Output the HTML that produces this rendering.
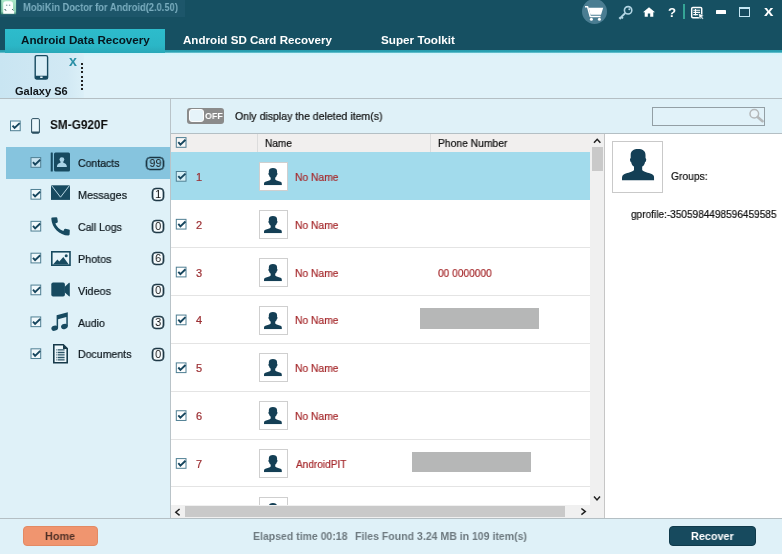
<!DOCTYPE html>
<html>
<head>
<meta charset="utf-8">
<title>MobiKin Doctor for Android</title>
<style>
*{box-sizing:border-box;margin:0;padding:0}
html,body{width:782px;height:554px;overflow:hidden;background:#dff1f8}
body{font-family:"Liberation Sans",sans-serif;font-size:11px;color:#111;position:relative}
.abs{position:absolute}
.t{position:absolute;white-space:nowrap;transform-origin:0 0;will-change:transform}
svg{display:block;overflow:visible}
#hdr{left:0;top:0;width:782px;height:50px;background:#165062}
#ttl{left:0;top:0;width:185px;height:16.5px;background:#1d566a}
#line{left:0;top:50px;width:782px;height:3px;background:linear-gradient(#279cad,#2ba3b4 72%,#a5dfe8)}
#tab1{left:5px;top:29px;width:160px;height:23.5px;background:linear-gradient(#2dbccc,#2bb6c6 70%,#29a8b8)}
#devbar{left:0;top:53px;width:782px;height:45px;background:linear-gradient(#d3f4fb,#e0f2f9 4px)}
#devtab{left:0;top:53px;width:84px;height:45px;background:linear-gradient(90deg,#c9e5f2,#d2e9f4 80%,#dcf0f8)}
.hl{background:#b4bfc4;height:1px}
.vl{background:#b9c3c8;width:1px}
.cb{width:11px;height:11px;border:1px solid #4d7f93;background:#f2fafd}
.cb svg{position:absolute;left:-1px;top:-1px}
.badge{height:13px;border:1px solid #1b3644;box-shadow:0 0 0 .35px #1b3644,inset 0 0 0 .35px #1b3644;border-radius:4px;font-size:11.5px;line-height:11px;text-align:center;color:#111;background:#f6fbfd}
.badge span{display:inline-block;transform:scaleX(.92);will-change:transform}
#main{left:171px;top:134px;width:419px;height:371px;background:#fff}
#thead{left:171px;top:134px;width:419px;height:18px;background:#f1efee}
.row{left:171px;width:419px;height:48px;border-bottom:1px solid #e4e4e4;background:#fff}
.row.sel{background:#a2dbec;border-bottom-color:#a2dbec}
.av{left:259px;width:29px;height:29px;border:1px solid #cfcfcf;background:#fff}
#detail{left:605px;top:134px;width:177px;height:384px;background:#fff}
#foot{left:0;top:519px;width:782px;height:35px;background:#dff1f8}
.gray{background:#b6b7b7}
</style>
</head>
<body>
<svg width="0" height="0" style="position:absolute">
<defs>
<g id="cbx"><rect x=".5" y=".5" width="9.700" height="9.700" fill="#fff" fill-opacity=".55" stroke="#4f7f93" stroke-width="1"/><path d="M2.500 5.100 L4.600 7.500 L9.700 2.600" fill="none" stroke="#17465e" stroke-width="1.900"/></g>
<symbol id="person" viewBox="0 0 252 247" preserveAspectRatio="none"><path d="M126 0C160 0 184 14 184 48L184 72C190 72 191 80 188 92C186 100 183 103 180 103C177 120 169 130 158 138L158 165C170 180 205 186 232 196C246 202 252 212 252 228L252 247L0 247L0 228C0 212 6 202 20 196C47 186 82 180 94 165L94 138C83 130 75 120 72 103C69 103 66 100 64 92C61 80 62 72 68 72L68 48C68 14 92 0 126 0Z" fill="#143f55"/></symbol>
</defs>
</svg>

<div id="hdr" class="abs"></div>
<div id="ttl" class="abs"></div>
<div id="line" class="abs"></div>
<div id="tab1" class="abs"></div>
<!--HDRICONS_BEGIN-->
<!-- app logo -->
<svg class="abs" style="left:0;top:0" width="17" height="15" viewBox="0 0 17 15"><defs><linearGradient id="lg" x1="0" y1="0" x2="0" y2="1"><stop offset="0" stop-color="#a9e6c6"/><stop offset=".8" stop-color="#8fd2b3"/><stop offset="1" stop-color="#3f8a78"/></linearGradient></defs><rect x=".3" y="0" width="1" height="14.300" fill="#1f6b52"/><rect x="1.200" y="0" width="14.900" height="14.300" fill="url(#lg)"/><path d="M3.200 13.700V4c0-1.600 1-2.700 2.600-2.700h4.600c1.600 0 2.600 1.100 2.600 2.700v5.200l1.200 2v2.500z" fill="#fbfefd"/><circle cx="6.700" cy="5.300" r=".8" fill="#8aa3a8"/><circle cx="9.600" cy="5.300" r=".8" fill="#8aa3a8"/><path d="M4.700 9 L6 10.700 M12.200 9.200 L13.300 10.400" stroke="#1d4a50" stroke-width="1"/></svg>
<!-- cart -->
<div class="abs" style="left:581.500px;top:-1.500px;width:25px;height:25px;border-radius:50%;background:#4a7d92"></div>
<svg class="abs" style="left:584px;top:5px" width="21" height="17" viewBox="0 0 21 17"><path d="M1 1.800 H3.600 L6.200 11.400 H16.600" fill="none" stroke="#fff" stroke-width="1.500" stroke-linejoin="round"/><path d="M4.600 2.800 H19.200 L17 9.800 H6.500z" fill="#fff"/><circle cx="7.400" cy="14.300" r="1.500" fill="#fff"/><circle cx="15.400" cy="14.300" r="1.500" fill="#fff"/></svg>
<!-- key -->
<svg class="abs" style="left:618px;top:5px" width="15" height="15" viewBox="0 0 15 15"><circle cx="10.100" cy="5.300" r="3.700" fill="none" stroke="#b3d6e4" stroke-width="1.600"/><circle cx="11.300" cy="4.200" r="1" fill="#b3d6e4"/><path d="M7.300 8 L1.600 13.600 M3.400 11.800 L5 13.400 M1.200 12.400 L2.900 14" fill="none" stroke="#b3d6e4" stroke-width="1.900"/></svg>
<!-- home -->
<svg class="abs" style="left:643px;top:7px" width="12" height="10" viewBox="0 0 12 10"><path d="M6 .2 L12 5.300 H10.300 V9.800 H7.200 V6.600 H4.800 V9.800 H1.700 V5.300 H0z" fill="#fff"/></svg>
<!-- sep -->
<div class="abs" style="left:683.300px;top:4px;width:1.600px;height:15px;background:#35a596"></div>
<!-- feedback -->
<svg class="abs" style="left:690px;top:6px" width="15" height="13" viewBox="0 0 15 13"><rect x="1.700" y="1.400" width="10" height="10.400" rx="1.200" fill="none" stroke="#fff" stroke-width="1.500"/><path d="M3.300 4.200h6.800M3.300 6.400h6.800M3.300 8.600h4.600M5.500 3v6.600" stroke="#fff" stroke-width="1.100"/><path d="M8.400 7.200 L14 9.700 L11.900 10.500 L13.500 12.400 L12.300 13.200 L10.900 11.200 L9.400 12.700z" fill="#fff" stroke="#165062" stroke-width=".5"/></svg>
<!-- min -->
<div class="abs" style="left:716px;top:10.400px;width:10px;height:3.600px;background:#fff;border-radius:.6px"></div>
<!-- max -->
<div class="abs" style="left:738.600px;top:6.800px;width:11.600px;height:10px;border:1.200px solid #c4e6f3;border-top-width:2.400px;background:#154a5e"></div>
<!--HDRICONS_END-->

<div id="devbar" class="abs"></div>
<div id="devtab" class="abs"></div>
<div class="t" style="left:69.3px;top:54px;font-weight:bold;font-size:14px;line-height:14px;color:#2a90a6;transform:scaleX(1.02)">x</div>
<div class="abs" style="left:81px;top:63px;width:2px;height:28px;background:repeating-linear-gradient(#222 0,#222 2px,transparent 2px,transparent 4.2px)"></div>
<div class="abs hl" style="left:0;top:98px;width:782px"></div>

<div class="abs vl" style="left:170px;top:99px;height:420px"></div>
<div class='abs' style='left:6px;top:147px;width:164px;height:32px;background:#86c4de'></div>
<svg class="abs" style="left:30px;top:157px" width="13" height="13"><use href="#cbx" x="0.50" y="0.10"/></svg>
<div class='abs badge' style='left:146px;top:156.5px;width:18px;background:transparent;'><span>99</span></div>
<svg class="abs" style="left:30px;top:188px" width="13" height="13"><use href="#cbx" x="0.50" y="0.97"/></svg>
<div class='abs badge' style='left:152px;top:188.4px;width:12px;'><span>1</span></div>
<svg class="abs" style="left:30px;top:220px" width="13" height="13"><use href="#cbx" x="0.50" y="0.84"/></svg>
<div class='abs badge' style='left:152px;top:220.2px;width:12px;'><span>0</span></div>
<svg class="abs" style="left:30px;top:252px" width="13" height="13"><use href="#cbx" x="0.50" y="0.71"/></svg>
<div class='abs badge' style='left:152px;top:252.1px;width:12px;'><span>6</span></div>
<svg class="abs" style="left:30px;top:284px" width="13" height="13"><use href="#cbx" x="0.50" y="0.58"/></svg>
<div class='abs badge' style='left:152px;top:284.0px;width:12px;'><span>0</span></div>
<svg class="abs" style="left:30px;top:316px" width="13" height="13"><use href="#cbx" x="0.50" y="0.45"/></svg>
<div class='abs badge' style='left:152px;top:315.9px;width:12px;'><span>3</span></div>
<svg class="abs" style="left:30px;top:348px" width="13" height="13"><use href="#cbx" x="0.50" y="0.32"/></svg>
<div class='abs badge' style='left:152px;top:347.7px;width:12px;'><span>0</span></div>
<!--SIDEICONS_BEGIN-->
<!-- device tab phone -->
<svg class="abs" style="left:34px;top:54px" width="15" height="27" viewBox="0 0 15 27"><rect x="1.200" y="1.600" width="12.400" height="23.400" rx="1.600" fill="#d9eef7" stroke="#174a60" stroke-width="1.400"/><path d="M1.200 21.800h12.400v1.800a1.400 1.400 0 0 1-1.400 1.400h-9.600a1.400 1.400 0 0 1-1.400-1.400z" fill="#174a60"/><rect x="6.200" y="22.500" width="2.400" height="1.500" fill="#e8f5fa"/></svg>
<!-- SM-G920F checkbox + phone -->
<svg class="abs" style="left:10px;top:120px" width="13" height="13"><use href="#cbx" x="0.00" y="0.50"/></svg>
<svg class="abs" style="left:31px;top:118px" width="9" height="16" viewBox="0 0 9 16"><rect x=".6" y=".6" width="7.800" height="14.600" rx="1.200" fill="#e9f6fb" stroke="#2a4f60" stroke-width="1"/><path d="M.6 13.400h7.800v.8a1 1 0 0 1-1 1h-5.800a1 1 0 0 1-1-1z" fill="#2a4f60"/></svg>
<!-- contacts -->
<svg class="abs" style="left:50px;top:152px" width="21" height="20" viewBox="0 0 21 20"><rect x=".7" y=".4" width="2.100" height="19.200" rx=".5" fill="#174a60"/><rect x="4" y=".4" width="16" height="19.200" rx="1.500" fill="#174a60"/><circle cx="11.900" cy="7.600" r="2.400" fill="#a9d3e6"/><path d="M6.900 15.100C6.900 12.200 8.600 11.200 10.500 10.800L10.500 9.200h2.800v1.600C15.200 11.200 16.900 12.200 16.900 15.100z" fill="#a9d3e6"/></svg>
<!-- messages -->
<svg class="abs" style="left:51px;top:185px" width="19" height="15" viewBox="0 0 19 15"><rect x="0" y=".3" width="19" height="14.600" fill="#174a60"/><path d="M.5 .5 L9.500 12.200 L18.500 .5" fill="none" stroke="#cbe7f3" stroke-width=".9"/></svg>
<!-- call logs -->
<svg class="abs" style="left:51px;top:217px" width="19" height="19" viewBox="0 0 19 19"><path d="M1.200 .5 L5.300 .2 C5.900 .2 6.200 .5 6.300 1 L6.800 4.600 C6.900 5.200 6.600 5.600 6.100 5.800 L4.300 6.500 C5.600 9.800 8.600 12.600 12.400 14.100 L13.200 12.300 C13.400 11.800 13.900 11.600 14.400 11.700 L17.900 12.400 C18.500 12.500 18.800 12.900 18.800 13.400 L18.600 17.300 C18.600 18 18.100 18.500 17.400 18.500 C8.400 18.300 .9 10.800 .3 1.700 C.3 1 .6 .6 1.200 .5z" fill="#174a60"/></svg>
<!-- photos -->
<svg class="abs" style="left:51px;top:251px" width="20" height="15" viewBox="0 0 20 15"><rect x=".8" y=".8" width="18.200" height="13.400" fill="#e6f4fa" stroke="#174a60" stroke-width="1.600"/><path d="M2 13.500 L6.400 8.400 L8.300 10.400 L12.300 6 L17.800 13.500z" fill="#174a60"/><circle cx="15.200" cy="4.700" r="1.500" fill="#174a60"/></svg>
<!-- videos -->
<svg class="abs" style="left:51px;top:282px" width="19" height="15" viewBox="0 0 19 15"><rect x=".3" y=".6" width="13.600" height="14" rx="1.800" fill="#174a60"/><path d="M13.500 5 L18 .8 Q18.800 .4 18.800 1.400 V13.700 Q18.800 14.700 18 14.300 L13.500 10.200z" fill="#174a60"/></svg>
<!-- audio -->
<svg class="abs" style="left:51px;top:312px" width="18" height="19" viewBox="0 0 18 19"><path d="M5.600 3.300 L16.800 .3 V14.200 H15.300 V5 L7.100 7.200 V16 H5.600z" fill="#174a60"/><ellipse cx="3.700" cy="16.200" rx="3.400" ry="2.500" transform="rotate(-18 3.700 16.200)" fill="#174a60"/><ellipse cx="13.400" cy="14.500" rx="3.400" ry="2.500" transform="rotate(-18 13.400 14.500)" fill="#174a60"/></svg>
<!-- documents -->
<svg class="abs" style="left:53px;top:344px" width="15" height="20" viewBox="0 0 15 20"><path d="M.8 .8 H10.300 L14.200 4.700 V18.700 H.8z" fill="#eef8fc" stroke="#173a4a" stroke-width="1.600"/><path d="M10 .8 L14.200 5 H10z" fill="#173a4a"/><path d="M3.400 5.900h8.200M3.400 8.500h8.200M3.400 10.900h8.200M3.400 13.500h8.200M3.400 15.900h8.200" stroke="#2a5366" stroke-width="1.300" stroke-dasharray="1 .6 20"/></svg>
<!--SIDEICONS_END-->

<div class="abs hl" style="left:171px;top:133px;width:611px"></div>
<div id="main" class="abs"></div>
<div id="detail" class="abs"></div>
<div class='abs' style='left:171px;top:152px;width:419px;height:48px;background:#a2dbec'></div>
<div class='abs av' style='top:162.00px'><svg style='position:absolute;left:4.4px;top:5px' width='17.9' height='17.2'><use href='#person' width='17.9' height='17.2'/></svg></div>
<svg class="abs" style="left:175px;top:171px" width="13" height="13"><use href="#cbx" x="0.80" y="0.00"/></svg>
<div class='abs' style='left:171px;top:247px;width:419px;height:1px;background:#e4e4e4'></div>
<div class='abs av' style='top:209.85px'><svg style='position:absolute;left:4.4px;top:5px' width='17.9' height='17.2'><use href='#person' width='17.9' height='17.2'/></svg></div>
<svg class="abs" style="left:175px;top:218px" width="13" height="13"><use href="#cbx" x="0.80" y="0.85"/></svg>
<div class='abs' style='left:171px;top:295px;width:419px;height:1px;background:#e4e4e4'></div>
<div class='abs av' style='top:257.70px'><svg style='position:absolute;left:4.4px;top:5px' width='17.9' height='17.2'><use href='#person' width='17.9' height='17.2'/></svg></div>
<svg class="abs" style="left:175px;top:266px" width="13" height="13"><use href="#cbx" x="0.80" y="0.70"/></svg>
<div class='abs' style='left:171px;top:343px;width:419px;height:1px;background:#e4e4e4'></div>
<div class='abs av' style='top:305.55px'><svg style='position:absolute;left:4.4px;top:5px' width='17.9' height='17.2'><use href='#person' width='17.9' height='17.2'/></svg></div>
<svg class="abs" style="left:175px;top:314px" width="13" height="13"><use href="#cbx" x="0.80" y="0.55"/></svg>
<div class='abs' style='left:171px;top:391px;width:419px;height:1px;background:#e4e4e4'></div>
<div class='abs av' style='top:353.40px'><svg style='position:absolute;left:4.4px;top:5px' width='17.9' height='17.2'><use href='#person' width='17.9' height='17.2'/></svg></div>
<svg class="abs" style="left:175px;top:362px" width="13" height="13"><use href="#cbx" x="0.80" y="0.40"/></svg>
<div class='abs' style='left:171px;top:439px;width:419px;height:1px;background:#e4e4e4'></div>
<div class='abs av' style='top:401.25px'><svg style='position:absolute;left:4.4px;top:5px' width='17.9' height='17.2'><use href='#person' width='17.9' height='17.2'/></svg></div>
<svg class="abs" style="left:175px;top:410px" width="13" height="13"><use href="#cbx" x="0.80" y="0.25"/></svg>
<div class='abs' style='left:171px;top:486px;width:419px;height:1px;background:#e4e4e4'></div>
<div class='abs av' style='top:449.10px'><svg style='position:absolute;left:4.4px;top:5px' width='17.9' height='17.2'><use href='#person' width='17.9' height='17.2'/></svg></div>
<svg class="abs" style="left:175px;top:458px" width="13" height="13"><use href="#cbx" x="0.80" y="0.10"/></svg>
<div class='abs' style='left:171px;top:534px;width:419px;height:1px;background:#e4e4e4'></div>
<div class='abs av' style='top:496.95px'><svg style='position:absolute;left:4.4px;top:5px' width='17.9' height='17.2'><use href='#person' width='17.9' height='17.2'/></svg></div>
<div id="thead" class="abs"></div>
<div class="abs" style="left:257px;top:134px;width:1px;height:18px;background:#dcdcdc"></div>
<div class="abs" style="left:430px;top:134px;width:1px;height:18px;background:#dcdcdc"></div>
<svg class="abs" style="left:175px;top:137px" width="13" height="13"><use href="#cbx" x="0.80" y="0.10"/></svg>
<div class="abs gray" style="left:420px;top:308px;width:119px;height:21px"></div>
<div class="abs gray" style="left:412px;top:452px;width:119px;height:20px"></div>

<!-- toggle -->
<div class="abs" style="left:187px;top:107.5px;width:37px;height:16px;background:#8b8b8b;border-radius:3px"></div>
<div class="abs" style="left:188.5px;top:109px;width:15px;height:13px;background:#e6f3f9;border:1px solid #fdfdfd;border-radius:3px"></div>
<div class="t" style="left:205px;top:111.3px;font-size:9.5px;line-height:10px;font-weight:bold;color:#fff;transform:scaleX(.93)">OFF</div>
<!-- search -->
<div class="abs" style="left:652px;top:107px;width:113px;height:19px;border:1px solid #939fa5;background:#e1f2f9"></div>
<svg class="abs" style="left:748px;top:108px" width="17" height="16" viewBox="0 0 17 16"><circle cx="6.300" cy="5.800" r="4.300" fill="#e9f4f9" stroke="#b4b8ba" stroke-width="1.500"/><path d="M9.600 9 L14.500 13.200" stroke="#b4b8ba" stroke-width="2.600" stroke-linecap="round"/></svg>

<!-- scrollbars -->
<div class="abs" style="left:590px;top:134px;width:14px;height:371px;background:#f0f0f0"></div>
<div class="abs" style="left:592px;top:147px;width:11px;height:24px;background:#c9c9c9"></div>
<svg class="abs" style="left:590px;top:134px" width="14" height="14" viewBox="0 0 14 14"><path d="M4 8.800 L7.200 5.300 L10.400 8.800" fill="none" stroke="#222" stroke-width="1.500"/></svg>
<svg class="abs" style="left:590px;top:491px" width="14" height="14" viewBox="0 0 14 14"><path d="M4 5.500 L7 8.900 L10 5.500" fill="none" stroke="#222" stroke-width="1.500"/></svg>
<div class="abs" style="left:171px;top:505px;width:433px;height:13px;background:#f0f0f0"></div>
<div class="abs" style="left:184.500px;top:506px;width:380px;height:11px;background:#c9c9c9"></div>
<svg class="abs" style="left:171px;top:505px" width="14" height="14" viewBox="0 0 14 14"><path d="M8.600 4 L4.800 7.200 L8.600 10.400" fill="none" stroke="#222" stroke-width="1.500"/></svg>
<svg class="abs" style="left:576px;top:505px" width="14" height="14" viewBox="0 0 14 14"><path d="M5.400 3.500 L9.300 6.600 L5.400 9.700" fill="none" stroke="#222" stroke-width="1.500"/></svg>
<div class="abs vl" style="left:604px;top:134px;height:385px;background:#c6c6c6"></div>

<!-- detail -->
<div class="abs" style="left:612px;top:141px;width:51px;height:52px;border:1px solid #c9c9c9;background:#fff"></div>
<svg class="abs" style="left:622px;top:148.700px" width="32.200" height="31.500"><use href="#person" width="32.200" height="31.500"/></svg>

<div id="foot" class="abs"></div>
<div class="abs hl" style="left:0;top:518px;width:782px"></div>
<div class="abs" style="left:23px;top:526px;width:75px;height:20px;background:#f0956f;border:1px solid #e38a64;border-radius:4px"></div>
<div class="abs" style="left:669px;top:526px;width:87px;height:20px;background:#174a5e;border:1px solid #103a4b;border-radius:4px"></div>

<div id="txt" style="position:absolute;left:0;top:0;width:782px;height:554px;will-change:transform">
<div class='t' style='left:22.53px;top:1.69px;font-size:11px;line-height:11px;font-weight:bold;color:#7aadbf;transform:scaleX(0.8493)'>MobiKin Doctor for Android(2.0.50)</div>
<div class='t' style='left:21.12px;top:35.07px;font-size:11.5px;line-height:11.5px;font-weight:bold;color:#06161e;transform:scaleX(1.0131)'>Android Data Recovery</div>
<div class='t' style='left:183.12px;top:35.07px;font-size:11.5px;line-height:11.5px;font-weight:bold;color:#ffffff;transform:scaleX(1.0083)'>Android SD Card Recovery</div>
<div class='t' style='left:381.12px;top:35.07px;font-size:11.5px;line-height:11.5px;font-weight:bold;color:#ffffff;transform:scaleX(1.0169)'>Super Toolkit</div>
<div class='t' style='left:15.25px;top:86.29px;font-size:11px;line-height:11px;font-weight:bold;color:#101418;transform:scaleX(0.9922)'>Galaxy S6</div>
<div class='t' style='left:49.71px;top:119.42px;font-size:12.5px;line-height:12.5px;font-weight:bold;color:#0c0c0c;transform:scaleX(0.9448)'>SM-G920F</div>
<div class='t' style='left:77.98px;top:158.19px;font-size:11px;line-height:11px;-webkit-text-stroke:.22px;color:#0c161c;transform:scaleX(0.9545)'>Contacts</div>
<div class='t' style='left:77.96px;top:190.06px;font-size:11px;line-height:11px;-webkit-text-stroke:.22px;color:#0c161c;transform:scaleX(0.9766)'>Messages</div>
<div class='t' style='left:77.97px;top:221.93px;font-size:11px;line-height:11px;-webkit-text-stroke:.22px;color:#0c161c;transform:scaleX(0.9583)'>Call Logs</div>
<div class='t' style='left:77.96px;top:253.80px;font-size:11px;line-height:11px;-webkit-text-stroke:.22px;color:#0c161c;transform:scaleX(0.9771)'>Photos</div>
<div class='t' style='left:77.96px;top:285.67px;font-size:11px;line-height:11px;-webkit-text-stroke:.22px;color:#0c161c;transform:scaleX(0.9862)'>Videos</div>
<div class='t' style='left:77.98px;top:317.54px;font-size:11px;line-height:11px;-webkit-text-stroke:.22px;color:#0c161c;transform:scaleX(0.9539)'>Audio</div>
<div class='t' style='left:77.97px;top:349.41px;font-size:11px;line-height:11px;-webkit-text-stroke:.22px;color:#0c161c;transform:scaleX(0.9606)'>Documents</div>
<div class='t' style='left:235.47px;top:110.99px;font-size:11px;line-height:11px;-webkit-text-stroke:.22px;color:#111;transform:scaleX(0.9570)'>Only display the deleted item(s)</div>
<div class='t' style='left:265.00px;top:137.69px;font-size:11px;line-height:11px;-webkit-text-stroke:.22px;color:#111;transform:scaleX(0.9170)'>Name</div>
<div class='t' style='left:438.48px;top:137.89px;font-size:11px;line-height:11px;-webkit-text-stroke:.22px;color:#111;transform:scaleX(0.9382)'>Phone Number</div>
<div class='t' style='left:195.95px;top:171.89px;font-size:11px;line-height:11px;-webkit-text-stroke:.22px;color:#9c3034;transform:scaleX(1.0000)'>1</div>
<div class='t' style='left:295.48px;top:171.89px;font-size:11px;line-height:11px;-webkit-text-stroke:.22px;color:#a62b2e;transform:scaleX(0.9367)'>No Name</div>
<div class='t' style='left:195.95px;top:219.74px;font-size:11px;line-height:11px;-webkit-text-stroke:.22px;color:#9c3034;transform:scaleX(1.0000)'>2</div>
<div class='t' style='left:295.48px;top:219.74px;font-size:11px;line-height:11px;-webkit-text-stroke:.22px;color:#a62b2e;transform:scaleX(0.9367)'>No Name</div>
<div class='t' style='left:195.95px;top:267.59px;font-size:11px;line-height:11px;-webkit-text-stroke:.22px;color:#9c3034;transform:scaleX(1.0000)'>3</div>
<div class='t' style='left:295.48px;top:267.59px;font-size:11px;line-height:11px;-webkit-text-stroke:.22px;color:#a62b2e;transform:scaleX(0.9367)'>No Name</div>
<div class='t' style='left:195.95px;top:315.44px;font-size:11px;line-height:11px;-webkit-text-stroke:.22px;color:#9c3034;transform:scaleX(1.0000)'>4</div>
<div class='t' style='left:295.48px;top:315.44px;font-size:11px;line-height:11px;-webkit-text-stroke:.22px;color:#a62b2e;transform:scaleX(0.9367)'>No Name</div>
<div class='t' style='left:195.95px;top:363.29px;font-size:11px;line-height:11px;-webkit-text-stroke:.22px;color:#9c3034;transform:scaleX(1.0000)'>5</div>
<div class='t' style='left:295.48px;top:363.29px;font-size:11px;line-height:11px;-webkit-text-stroke:.22px;color:#a62b2e;transform:scaleX(0.9367)'>No Name</div>
<div class='t' style='left:195.95px;top:411.14px;font-size:11px;line-height:11px;-webkit-text-stroke:.22px;color:#9c3034;transform:scaleX(1.0000)'>6</div>
<div class='t' style='left:295.48px;top:411.14px;font-size:11px;line-height:11px;-webkit-text-stroke:.22px;color:#a62b2e;transform:scaleX(0.9367)'>No Name</div>
<div class='t' style='left:195.95px;top:458.99px;font-size:11px;line-height:11px;-webkit-text-stroke:.22px;color:#9c3034;transform:scaleX(1.0000)'>7</div>
<div class='t' style='left:295.50px;top:458.99px;font-size:11px;line-height:11px;-webkit-text-stroke:.22px;color:#a62b2e;transform:scaleX(0.9160)'>AndroidPIT</div>
<div class='t' style='left:437.69px;top:267.59px;font-size:11px;line-height:11px;-webkit-text-stroke:.22px;color:#a62b2e;transform:scaleX(0.9241)'>00 0000000</div>
<div class='t' style='left:671.09px;top:170.69px;font-size:11px;line-height:11px;-webkit-text-stroke:.22px;color:#111;transform:scaleX(0.9358)'>Groups:</div>
<div class='t' style='left:630.50px;top:209.29px;font-size:11px;line-height:11px;-webkit-text-stroke:.22px;color:#111;transform:scaleX(0.9149)'>gprofile:-3505984498596459585</div>
<div class='t' style='left:253.48px;top:530.99px;font-size:11px;line-height:11px;font-weight:bold;color:#6e7a80;transform:scaleX(0.9534)'>Elapsed time 00:18</div>
<div class='t' style='left:355.47px;top:530.99px;font-size:11px;line-height:11px;font-weight:bold;color:#6e7a80;transform:scaleX(0.9568)'>Files Found 3.24 MB in 109 item(s)</div>
<div class='t' style='left:45.46px;top:530.99px;font-size:11px;line-height:11px;font-weight:bold;color:#4f3026;transform:scaleX(0.9806)'>Home</div>
<div class='t' style='left:690.86px;top:530.89px;font-size:11px;line-height:11px;font-weight:bold;color:#ffffff;transform:scaleX(0.9828)'>Recover</div>
<div class='t' style='left:668.14px;top:6.92px;font-size:12.5px;line-height:12.5px;font-weight:bold;color:#ffffff;transform:scaleX(1.0590)'>?</div>
<div class='t' style='left:763.85px;top:3.30px;font-size:15px;line-height:15px;font-weight:bold;color:#ffffff;transform:scaleX(1.1296)'>x</div>
</div>
</body>
</html>
